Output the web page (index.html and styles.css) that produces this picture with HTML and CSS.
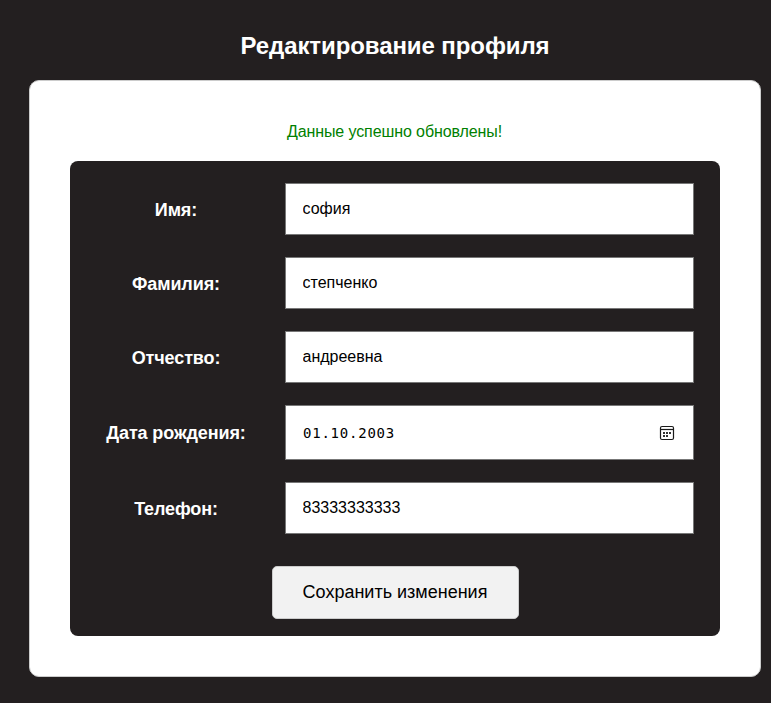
FILE: index.html
```html
<!DOCTYPE html>
<html lang="ru">
<head>
<meta charset="utf-8">
<title>Редактирование профиля</title>
<link rel="stylesheet" href="styles.css">
</head>
<body>
<h1 class="title">Редактирование профиля</h1>
<main class="card">
  <p class="message">Данные успешно обновлены!</p>
  <form class="form">
    <label class="label" for="f1">Имя:</label>
    <input class="field" id="f1" type="text" value="софия">
    <label class="label" for="f2">Фамилия:</label>
    <input class="field" id="f2" type="text" value="степченко">
    <label class="label" for="f3">Отчество:</label>
    <input class="field" id="f3" type="text" value="андреевна">
    <label class="label" for="f4">Дата рождения:</label>
    <div class="field date">
      <input class="date-input" id="f4" type="text" value="01.10.2003">
      <svg class="cal" width="16" height="16" viewBox="0 0 16 16" fill="none">
        <rect x="1.5" y="1.5" width="13" height="13" rx="1.5" stroke="#1a1a1a" stroke-width="1.2"/>
        <path d="M1.5 4.5H14.5" stroke="#1a1a1a" stroke-width="1.2"/>
        <path d="M4 7h2v2H4zM7 7h2v2H7zM10 7h2v2h-2zM4 10h2v2H4zM7 10h2v2H7z" fill="#333"/>
      </svg>
    </div>
    <label class="label" for="f5">Телефон:</label>
    <input class="field" id="f5" type="text" value="83333333333">
    <button class="save" type="button">Сохранить изменения</button>
  </form>
</main>
</body>
</html>
```
FILE: styles.css
```css
* { box-sizing: border-box; }
html, body { height: 100%; }
body {
  margin: 0;
  padding: 32px 10px 0 29px;
  background: #231f20;
  font-family: "Liberation Sans", Arial, sans-serif;
  overflow: hidden;
}
.title {
  margin: 0 0 20px;
  height: 28px;
  line-height: 28px;
  text-align: center;
  color: #fff;
  font-size: 24px;
  font-weight: 700;
  letter-spacing: -0.09px;
}
.card {
  height: 597px;
  padding: 41px 40px 0;
  background: #fff;
  border: 1px solid #ccc;
  border-radius: 10px;
}
.message {
  margin: 0 0 19px;
  height: 20px;
  line-height: 20px;
  text-align: center;
  color: #008000;
  font-size: 16px;
  letter-spacing: -0.1px;
  padding-right: 1px;
}
.form {
  display: grid;
  grid-template-columns: 160px 409px;
  column-gap: 29px;
  row-gap: 22px;
  align-items: center;
  align-content: start;
  justify-content: start;
  height: 475px;
  padding: 22px 26px 0;
  background: #231f20;
  border-radius: 8px;
}
.label {
  margin-top: 2px;
  text-align: center;
  color: #fff;
  font-size: 18px;
  font-weight: 700;
  letter-spacing: -0.12px;
}
.field {
  width: 100%;
  height: 52px;
  padding: 0 16.5px;
  background: #fff;
  border: 1px solid #777;
  color: #000;
  font-family: "Liberation Sans", Arial, sans-serif;
  font-size: 16px;
  outline: none;
}
.date {
  display: flex;
  align-items: center;
  justify-content: space-between;
  height: 55px;
  padding: 0 18px 0 17px;
}
.date-input {
  flex: 1;
  min-width: 0;
  border: 0;
  padding: 0;
  outline: none;
  color: #000;
  font-family: "DejaVu Sans Mono", monospace;
  font-size: 14px;
  letter-spacing: 0.77px;
}
.cal { flex: none; }
.save {
  grid-column: 1 / -1;
  justify-self: center;
  width: 247px;
  height: 53px;
  margin-top: 10px;
  background: #f2f2f2;
  border: 1px solid #ccc;
  border-radius: 5px;
  color: #000;
  font-family: "Liberation Sans", Arial, sans-serif;
  font-size: 18px;
}
```
